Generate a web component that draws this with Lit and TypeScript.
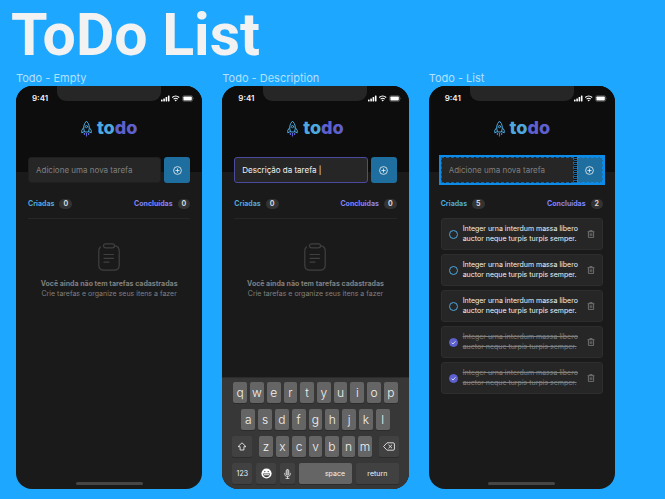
import { LitElement, html, css, svg, nothing } from "lit";
import { customElement, property } from "lit/decorators.js";
import { classMap } from "lit/directives/class-map.js";

interface Task {
  text: string;
  done: boolean;
}

const TASK_TEXT = "Integer urna interdum massa libero auctor neque turpis turpis semper.";
const TASKS: Task[] = [false, false, false, true, true].map((done) => ({ text: TASK_TEXT, done }));

const reset = css`
  * {
    box-sizing: border-box;
  }
  button,
  input {
    font: inherit;
    color: inherit;
    margin: 0;
    padding: 0;
    border: 0;
    outline: 0;
    background: none;
  }
  svg {
    display: block;
    flex: none;
  }
`;

@customElement("soft-keyboard")
export class SoftKeyboard extends LitElement {
  static styles = [
    reset,
    css`
      :host {
        display: flex;
        flex-direction: column;
        gap: 6px;
        padding: 4px 10px 5px;
        background: #373737;
        border-top: 1px solid #2b2b2b;
        color: #f2f2f2;
      }
      .row {
        display: flex;
        gap: 3px;
      }
      .top {
        padding: 0 1px;
      }
      .middle {
        padding: 0 9px;
      }
      .bottom {
        gap: 4px;
      }
      .letters {
        display: flex;
        flex: 1;
        gap: 3px;
        padding: 0 4px;
      }
      .key {
        flex: 1 1 0;
        min-width: 0;
        height: 21px;
        display: flex;
        align-items: center;
        justify-content: center;
        border-radius: 2px;
        background: #656565;
        box-shadow: 0 1px 0 #2c2c2c;
        font-size: 12px;
        line-height: 20px;
        font-weight: 300;
      }
      .dark {
        background: #414141;
        font-size: 7px;
        font-weight: 400;
      }
      .mod {
        flex: 0 0 20px;
      }
      .mic {
        flex: 0 0 15px;
      }
      .space {
        flex: 46 1 0;
        font-size: 7px;
        font-weight: 400;
        justify-content: flex-end;
        padding-right: 7px;
      }
      .return {
        flex: 43 1 0;
      }
    `,
  ];

  private keys(letters: string) {
    return [...letters].map((l) => html`<button class="key">${l}</button>`);
  }

  render() {
    return html`
      <div class="row top">${this.keys("qwertyuiop")}</div>
      <div class="row middle">${this.keys("asdfghjkl")}</div>
      <div class="row">
        <button class="key dark mod" aria-label="Shift">
          <svg width="10" height="9" viewBox="0 0 10 9" fill="none" stroke="#e8e8e8" stroke-width="0.9" stroke-linejoin="round">
            <path d="M5 .8 9 4.7H6.9V8H3.1V4.7H1Z" />
          </svg>
        </button>
        <div class="letters">${this.keys("zxcvbnm")}</div>
        <button class="key dark mod" aria-label="Delete">
          <svg width="12" height="9" viewBox="0 0 12 9" fill="none" stroke="#e8e8e8" stroke-width="0.9" stroke-linejoin="round">
            <path d="M4 .8H10.2Q11.4 .8 11.4 2V7Q11.4 8.2 10.2 8.2H4L.6 4.5ZM5.5 2.8 9 6.2M9 2.8 5.5 6.2" />
          </svg>
        </button>
      </div>
      <div class="row bottom">
        <button class="key dark mod">123</button>
        <button class="key dark mod" aria-label="Emoji">
          <svg width="11" height="11" viewBox="0 0 11 11">
            <circle cx="5.5" cy="5.5" r="5.1" fill="#fff" />
            <circle cx="3.8" cy="3.6" r=".7" fill="#414141" />
            <circle cx="7.2" cy="3.6" r=".7" fill="#414141" />
            <path d="M2 5.6H9Q8.6 9.2 5.5 9.2T2 5.6Z" fill="#414141" />
            <path d="M2.8 6.3H8.2V7.2H3Z" fill="#fff" />
          </svg>
        </button>
        <button class="key dark mic" aria-label="Dictate">
          <svg width="7" height="10" viewBox="0 0 7 10" fill="none" stroke="#e8e8e8" stroke-width="0.8" stroke-linecap="round">
            <rect x="2.2" y=".5" width="2.6" height="5.6" rx="1.3" fill="#999" />
            <path d="M.7 4.3V5Q.7 7.5 3.5 7.5T6.3 5V4.3M3.5 7.5V9.4M2 9.4H5" />
          </svg>
        </button>
        <button class="key space">space</button>
        <button class="key dark return">return</button>
      </div>
    `;
  }
}

@customElement("todo-phone")
export class TodoPhone extends LitElement {
  @property() draft = "";
  @property({ type: Boolean }) focusedInput = false;
  @property({ type: Boolean }) selected = false;
  @property({ type: Boolean }) keyboard = false;
  @property({ attribute: false }) tasks: Task[] = [];

  static styles = [
    reset,
    css`
      :host {
        display: flex;
        flex-direction: column;
        aspect-ratio: 375 / 812;
        border-radius: 16px;
        overflow: hidden;
        background: #1a1a1a;
        color: #f2f2f2;
        font-size: 7px;
        line-height: 10px;
      }
      header {
        background: #0d0d0d;
        height: 86px;
      }
      .status {
        display: grid;
        grid-template-columns: minmax(0, 1fr) 104px minmax(0, 1fr);
        height: 24px;
      }
      .time {
        padding: 7px 0 0 16px;
        font-size: 8px;
        font-weight: 600;
      }
      .notch {
        height: 15px;
        border-radius: 0 0 9px 9px;
        background: #262626;
      }
      .signals {
        display: flex;
        align-items: center;
        justify-content: flex-end;
        padding-right: 8px;
      }
      .logo {
        display: flex;
        align-items: center;
        justify-content: center;
        gap: 5px;
        margin-top: 8px;
        font-size: 18px;
        line-height: 20px;
        font-weight: 800;
        color: #4ea8de;
      }
      .logo b {
        font-weight: inherit;
        color: #5e60ce;
      }
      main {
        flex: 1;
        display: flex;
        flex-direction: column;
        padding: 0 12px;
      }
      form {
        display: flex;
        gap: 3px;
        margin-top: -15px;
        position: relative;
      }
      .field {
        flex: 1;
        min-width: 0;
        height: 26px;
        padding: 0 7px;
        border: 1px solid #1f1f1f;
        border-radius: 3px;
        background: #262626;
        font-size: 8px;
      }
      .field::placeholder {
        color: #808080;
        opacity: 1;
      }
      .focused {
        border-color: #4a4ba0;
      }
      .add {
        width: 26px;
        height: 26px;
        display: grid;
        place-items: center;
        border-radius: 3px;
        background: #1e6f9f;
      }
      .selection {
        outline: 2px solid #0d8be8;
        gap: 0;
      }
      .selection .field {
        border: 1px dashed #15649f;
        border-radius: 0;
      }
      .selection .add {
        border: 1px dashed #0d8be8;
        border-radius: 0;
      }
      .gap {
        width: 3px;
        background: repeating-linear-gradient(#0d0d0d 0 1px, #15649f 1px 2px);
      }
      .counts {
        display: flex;
        justify-content: space-between;
        margin-top: 16px;
        font-weight: 700;
      }
      .count {
        display: flex;
        align-items: center;
        gap: 5px;
        color: #4ea8de;
      }
      .done-count {
        color: #8284fa;
      }
      .badge {
        min-width: 12px;
        padding: 0 4px;
        border-radius: 5px;
        background: #333333;
        color: #d9d9d9;
        text-align: center;
      }
      .empty {
        display: flex;
        flex-direction: column;
        align-items: center;
        margin-top: 9px;
        padding-top: 24px;
        border-top: 1px solid #262626;
        color: #808080;
        text-align: center;
      }
      .empty svg {
        margin-bottom: 8px;
      }
      p {
        margin: 0;
      }
      ul {
        display: flex;
        flex-direction: column;
        gap: 4px;
        list-style: none;
        margin: 9px 0 0;
        padding: 0;
      }
      li {
        display: flex;
        align-items: center;
        gap: 5px;
        padding: 5px 7px;
        border: 1px solid #2e2e2e;
        border-radius: 3px;
        background: #262626;
      }
      .task {
        flex: 1;
        display: flex;
        align-items: center;
        gap: 5px;
      }
      .done {
        color: #808080;
        text-decoration: line-through;
      }
      .check {
        appearance: none;
        flex: none;
        width: 9px;
        height: 9px;
        border: 1px solid #4ea8de;
        border-radius: 50%;
      }
      .check:checked {
        border-color: #5e60ce;
        background: #5e60ce
          url("data:image/svg+xml,%3Csvg xmlns='http://www.w3.org/2000/svg' viewBox='0 0 7 7'%3E%3Cpath d='M1.6 3.7 3 5 5.4 2.3' fill='none' stroke='%23f2f2f2' stroke-width='.8'/%3E%3C/svg%3E");
      }
      .home {
        align-self: center;
        width: 36%;
        height: 3px;
        margin-bottom: 4px;
        border-radius: 2px;
        background: #464646;
      }
    `,
  ];

  private signals() {
    return html`<svg width="33" height="7" viewBox="0 0 33 7" aria-hidden="true">
      <g fill="#fff">
        <rect x="0" y="4.5" width="1.6" height="2" rx=".4" />
        <rect x="2.3" y="3.4" width="1.6" height="3.1" rx=".4" />
        <rect x="4.6" y="2" width="1.6" height="4.5" rx=".4" />
        <rect x="6.9" y=".6" width="1.6" height="5.9" rx=".4" />
        <rect x="22.4" y="1.4" width="8.4" height="4.2" rx=".8" />
        <path d="M32 2.6Q32.9 3.5 32 4.4Z" opacity=".5" />
      </g>
      <g fill="none" stroke="#fff">
        <path d="M11.2 2.5Q14.7 -.5 18.2 2.5M12.6 4.1Q14.7 2.3 16.8 4.1" stroke-width="1.1" />
        <rect x="21.6" y=".7" width="10" height="5.6" rx="1.5" stroke-width=".5" opacity=".5" />
      </g>
      <path d="M13.5 5.1Q14.7 4.2 15.9 5.1L14.7 6.5Z" fill="#fff" />
    </svg>`;
  }

  private rocket() {
    return svg`<svg width="11" height="17" viewBox="0 0 11 17" fill="none" aria-hidden="true">
      <g stroke="#4ea8de" stroke-width="1" stroke-linejoin="round" stroke-linecap="round">
        <path d="M3.4 11.6Q1.2 5.2 5.5 1.2Q9.8 5.2 7.6 11.6Z" />
        <path d="M2.6 7.8.8 10.2V12.9L3.2 11.6M8.4 7.8 10.2 10.2V12.9L7.8 11.6" />
        <circle cx="5.5" cy="6.6" r="1.1" />
      </g>
      <path d="M3.4 13V15M5.5 13V16.6M7.6 13V15" stroke="#5e60ce" stroke-width="1.2" />
    </svg>`;
  }

  private count(label: string, n: number, done = false) {
    return html`<div class=${classMap({ count: true, "done-count": done })}>
      ${label}<span class="badge">${n}</span>
    </div>`;
  }

  private emptyState() {
    return html`<section class="empty">
      <svg width="22" height="28" viewBox="0 0 22 28" fill="none" stroke="#404040" stroke-width="1.2" stroke-linecap="round" stroke-linejoin="round" aria-hidden="true">
        <rect x="5.5" y=".8" width="11" height="4" rx="2" />
        <path d="M16.5 2.8Q21.2 3 21.2 8V22Q21.2 27.2 16 27.2H6Q.8 27.2 .8 22V8Q.8 5.3 2.4 4" />
        <path d="M6 11.5H15.5M6 15.3H15.5M6 19.2H11" />
      </svg>
      <strong>Você ainda não tem tarefas cadastradas</strong>
      <p>Crie tarefas e organize seus itens a fazer</p>
    </section>`;
  }

  private taskItem(t: Task) {
    return html`<li>
      <label class="task">
        <input class="check" type="checkbox" .checked=${t.done} />
        <span class=${classMap({ done: t.done })}>${t.text}</span>
      </label>
      <button aria-label="Remover tarefa">
        <svg width="8" height="8" viewBox="0 0 8 8" fill="none" stroke="#808080" stroke-width=".8">
          <path d="M.6 1.7H7.4M2.8 1.6V.6H5.2V1.6M1.4 1.8V7.4H6.6V1.8M3.2 3.3V5.9M4.8 3.3V5.9" />
        </svg>
      </button>
    </li>`;
  }

  render() {
    const done = this.tasks.filter((t) => t.done).length;
    return html`
      <header>
        <div class="status">
          <span class="time">9:41</span>
          <span class="notch"></span>
          <span class="signals">${this.signals()}</span>
        </div>
        <div class="logo">${this.rocket()}<span>to<b>do</b></span></div>
      </header>
      <main>
        <form class=${classMap({ selection: this.selected })}>
          <input
            class=${classMap({ field: true, focused: this.focusedInput })}
            type="text"
            aria-label="Nova tarefa"
            placeholder="Adicione uma nova tarefa"
            .value=${this.draft}
          />
          ${this.selected ? html`<span class="gap"></span>` : nothing}
          <button class="add" type="button" aria-label="Adicionar">
            <svg width="9" height="9" viewBox="0 0 9 9" fill="none" stroke="#f2f2f2" stroke-width=".8">
              <circle cx="4.5" cy="4.5" r="3.9" />
              <path d="M4.5 2.5V6.5M2.5 4.5H6.5" />
            </svg>
          </button>
        </form>
        <div class="counts">
          ${this.count("Criadas", this.tasks.length)} ${this.count("Concluídas", done, true)}
        </div>
        ${this.tasks.length ? html`<ul>${this.tasks.map((t) => this.taskItem(t))}</ul>` : this.emptyState()}
      </main>
      ${this.keyboard ? html`<soft-keyboard></soft-keyboard>` : html`<div class="home"></div>`}
    `;
  }
}

@customElement("app-root")
export class AppRoot extends LitElement {
  static styles = css`
    :host {
      display: block;
      box-sizing: border-box;
      min-height: 100vh;
      padding: 0 50px 9px 16px;
      background: #1ea7ff;
      font-family: Inter, "Liberation Sans", sans-serif;
    }
    h1 {
      margin: 0 0 0 -5px;
      font-family: Roboto, sans-serif;
      font-size: 59px;
      line-height: 70px;
      font-weight: 700;
      color: #f2f2f2;
    }
    .screens {
      display: grid;
      grid-template-columns: repeat(3, minmax(0, 1fr));
      gap: 20px;
      padding-top: 1px;
    }
    h2 {
      margin: 0 0 1px;
      font-size: 11px;
      line-height: 14px;
      font-weight: 400;
      color: #b4e0ff;
    }
  `;

  render() {
    return html`
      <h1>ToDo List</h1>
      <div class="screens">
        <section>
          <h2>Todo - Empty</h2>
          <todo-phone></todo-phone>
        </section>
        <section>
          <h2>Todo - Description</h2>
          <todo-phone draft="Descrição da tarefa |" focusedInput keyboard></todo-phone>
        </section>
        <section>
          <h2>Todo - List</h2>
          <todo-phone selected .tasks=${TASKS}></todo-phone>
        </section>
      </div>
    `;
  }
}
